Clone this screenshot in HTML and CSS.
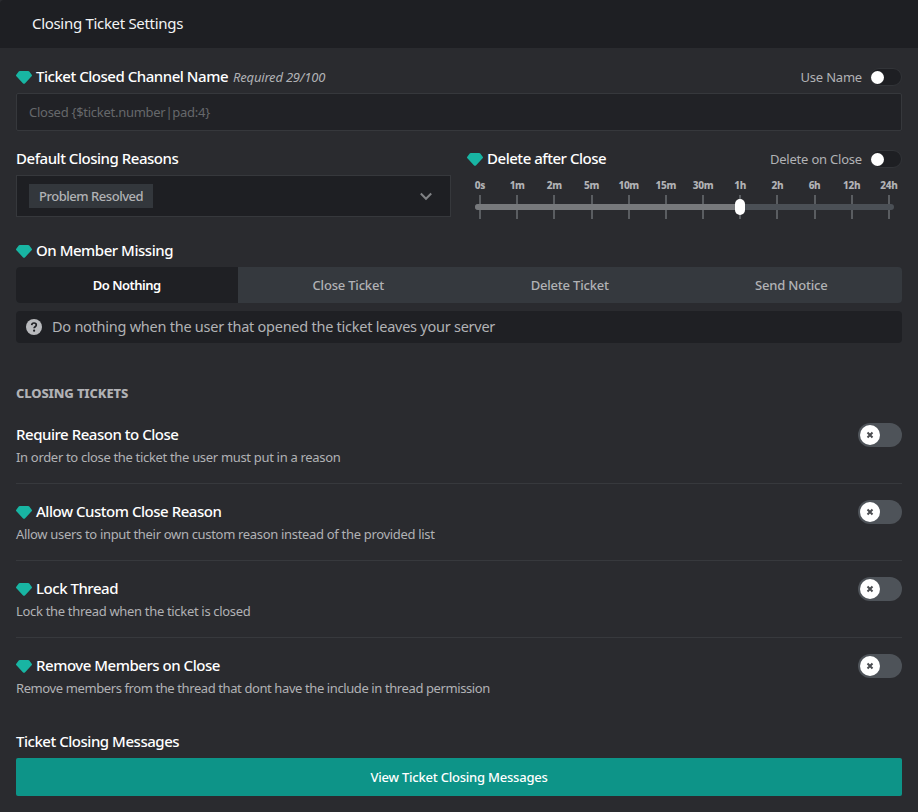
FILE: index.html
```html
<!DOCTYPE html>
<html lang="en">
<head>
<meta charset="utf-8">
<title>Closing Ticket Settings</title>
<link rel="stylesheet" href="styles.css">
</head>
<body>
<svg class="defs" width="0" height="0" aria-hidden="true">
  <symbol id="gem" viewBox="0 0 16 13"><path d="M3.800 0h8.400q.7 0 1.100.5l2.400 3.200q.6.8-.1 1.600l-6.700 7.100q-.9.900-1.800 0L.4 5.300q-.7-.8-.1-1.600L2.700.5Q3.100 0 3.800 0z"/></symbol>
  <symbol id="cross" viewBox="0 0 8 8"><path d="M1.500 1.500l5 5M6.500 1.500l-5 5"/></symbol>
</svg>
<section class="card">
  <header class="card-header">Closing Ticket Settings</header>
  <main class="card-body">
    <div class="field">
      <div class="label-row">
        <svg class="gem"><use href="#gem"/></svg><h3 class="title">Ticket Closed Channel Name</h3><em class="required">Required 29/100</em>
        <span class="mini-label">Use Name</span><span class="mini-toggle"></span>
      </div>
      <div class="input">Closed {$ticket.number|pad:4}</div>
    </div>

    <div class="columns">
      <div class="field">
        <div class="label-row"><h3 class="title">Default Closing Reasons</h3></div>
        <div class="select">
          <span class="tag">Problem Resolved</span>
          <svg class="chevron" viewBox="0 0 14 9"><path d="M1.800 1.500L7 6.800l5.200-5.300"/></svg>
        </div>
      </div>
      <div class="field">
        <div class="label-row">
          <svg class="gem"><use href="#gem"/></svg><h3 class="title">Delete after Close</h3>
          <span class="mini-label">Delete on Close</span><span class="mini-toggle"></span>
        </div>
        <div class="slider">
          <div class="stops">
            <span class="stop">0s</span><span class="stop">1m</span><span class="stop">2m</span><span class="stop">5m</span><span class="stop">10m</span><span class="stop">15m</span><span class="stop">30m</span><span class="stop">1h</span><span class="stop">2h</span><span class="stop">6h</span><span class="stop">12h</span><span class="stop">24h</span>
          </div>
          <div class="track"><div class="fill"></div><div class="handle"></div></div>
        </div>
      </div>
    </div>

    <div class="field missing">
      <div class="label-row"><svg class="gem"><use href="#gem"/></svg><h3 class="title">On Member Missing</h3></div>
      <div class="segments">
        <div class="segment active">Do Nothing</div>
        <div class="segment">Close Ticket</div>
        <div class="segment">Delete Ticket</div>
        <div class="segment">Send Notice</div>
      </div>
      <div class="hint">
        <svg class="help" viewBox="0 0 16 16"><circle cx="8" cy="8" r="8"/><path d="M5.700 6.100C5.800 4.700 6.700 4 8 4s2.300.8 2.300 2c0 1.700-2.200 1.700-2.200 3.300"/><circle class="dot" cx="8.100" cy="11.700" r="1.100"/></svg>
        <span class="hint-text">Do nothing when the user that opened the ticket leaves your server</span>
      </div>
    </div>

    <h2 class="section">CLOSING TICKETS</h2>
    <div class="option">
      <div class="option-text">
        <div class="option-title"><h3 class="title">Require Reason to Close</h3></div>
        <p class="desc">In order to close the ticket the user must put in a reason</p>
      </div>
      <span class="toggle"><span class="knob"><svg><use href="#cross"/></svg></span></span>
    </div>
    <div class="option">
      <div class="option-text">
        <div class="option-title"><svg class="gem"><use href="#gem"/></svg><h3 class="title">Allow Custom Close Reason</h3></div>
        <p class="desc">Allow users to input their own custom reason instead of the provided list</p>
      </div>
      <span class="toggle"><span class="knob"><svg><use href="#cross"/></svg></span></span>
    </div>
    <div class="option">
      <div class="option-text">
        <div class="option-title"><svg class="gem"><use href="#gem"/></svg><h3 class="title">Lock Thread</h3></div>
        <p class="desc">Lock the thread when the ticket is closed</p>
      </div>
      <span class="toggle"><span class="knob"><svg><use href="#cross"/></svg></span></span>
    </div>
    <div class="option last">
      <div class="option-text">
        <div class="option-title"><svg class="gem"><use href="#gem"/></svg><h3 class="title">Remove Members on Close</h3></div>
        <p class="desc tight">Remove members from the thread that dont have the include in thread permission</p>
      </div>
      <span class="toggle"><span class="knob"><svg><use href="#cross"/></svg></span></span>
    </div>

    <div class="messages-title"><h3 class="title">Ticket Closing Messages</h3></div>
    <div class="button">View Ticket Closing Messages</div>
  </main>
</section>
</body>
</html>
```
FILE: styles.css
```css
* { box-sizing: border-box; }

body {
  margin: 0;
  background: #2a2b2f;
  color: #b1b2b5;
  font-family: "Noto Sans", sans-serif;
  font-size: 13px;
}

h2, h3, p { margin: 0; }

.defs { display: block; }

.card { height: 812px; overflow: hidden; }

.card-header {
  height: 48px;
  padding-left: 32px;
  border-radius: 4px 0 0 0;
  background: #1e1f23;
  color: #f3f4f5;
  font-size: 15px;
  line-height: 47px;
  letter-spacing: -0.31px;
}

.card-body { padding: 13px 16px 16px; }

.label-row {
  display: flex;
  align-items: center;
  height: 32px;
}

.gem {
  flex: none;
  width: 16px;
  height: 13px;
  margin-right: 4px;
  fill: #18b5a3;
}

.title {
  margin-bottom: 2px;
  color: #fff;
  font-size: 15px;
  font-weight: 550;
  line-height: 22px;
  letter-spacing: -0.47px;
  white-space: nowrap;
}

.required {
  margin-left: 5px;
  letter-spacing: -0.2px;
}

.mini-label {
  margin-left: auto;
  margin-right: 8px;
  letter-spacing: -0.21px;
}

.mini-toggle {
  display: flex;
  align-items: center;
  width: 32px;
  height: 18px;
  padding-left: 0;
  border: 1px solid #323438;
  border-radius: 9px;
  background: #1e1f23;
}

.mini-toggle::before {
  content: "";
  width: 13px;
  height: 13px;
  border-radius: 50%;
  background: #fff;
}

.input {
  height: 38px;
  padding-left: 12px;
  border: 1px solid #36383c;
  border-radius: 2px;
  background: #212226;
  color: #66686b;
  line-height: 36px;
  letter-spacing: -0.27px;
}

.columns {
  display: grid;
  grid-template-columns: 1fr 1fr;
  gap: 16px;
  margin-top: 12px;
}

.select {
  display: flex;
  align-items: center;
  justify-content: space-between;
  height: 42px;
  padding: 0 17px 0 12px;
  border: 1px solid #36383c;
  background: #1e1f23;
}

.tag {
  height: 24px;
  padding: 0 10px;
  background: #33373c;
  font-weight: 500;
  line-height: 24px;
  letter-spacing: -0.47px;
}

.chevron {
  width: 14px;
  height: 9px;
  fill: none;
  stroke: #808285;
  stroke-width: 2;
}

.slider { padding: 0 8px; }

.stops {
  display: grid;
  grid-template-columns: repeat(12, 37.18px);
  margin: 0 -13.6px;
}

.stop {
  display: flex;
  flex-direction: column;
  align-items: center;
  height: 44px;
  font-size: 10px;
  font-weight: 800;
  line-height: 20px;
  letter-spacing: -0.3px;
}

.stop::after {
  content: "";
  width: 2px;
  height: 24px;
  background: #5a5d61;
}

.track {
  position: relative;
  height: 6px;
  margin-top: -15px;
  border-radius: 3px;
  background: #4b5056;
}

.fill {
  width: 265px;
  height: 6px;
  border-radius: 3px 0 0 3px;
  background: #77797c;
}

.handle {
  position: absolute;
  top: -5px;
  left: 260px;
  width: 10px;
  height: 16px;
  border-radius: 5px;
  background: #fff;
}

.missing { margin-top: 18px; }

.segments {
  display: grid;
  grid-template-columns: repeat(4, 1fr);
  height: 36px;
  border-radius: 4px;
  background: #35393e;
  overflow: hidden;
}

.segment {
  font-weight: 500;
  line-height: 36px;
  letter-spacing: -0.2px;
  text-align: center;
}

.active {
  background: #1f2024;
  color: #fff;
  font-weight: 600;
  letter-spacing: -0.49px;
}

.hint {
  display: flex;
  align-items: center;
  gap: 10px;
  height: 32px;
  margin-top: 8px;
  padding-left: 10px;
  border-radius: 4px;
  background: #1f2024;
  font-size: 14.5px;
  letter-spacing: -0.25px;
}

.hint-text { margin-bottom: 2px; }

.help {
  width: 16px;
  height: 16px;
  fill: #b9babd;
}

.help path {
  fill: none;
  stroke: #1f2024;
  stroke-width: 1.7;
}

.help .dot { fill: #1f2024; }

.section {
  margin-top: 40px;
  font-size: 13px;
  font-weight: 800;
  line-height: 20px;
  letter-spacing: -0.15px;
}

.option {
  display: flex;
  justify-content: space-between;
  margin-bottom: 16px;
  padding-bottom: 16px;
  border-bottom: 1px solid #37393d;
}

.section + .option { margin-top: 20px; }

.option.last {
  margin-bottom: 0;
  border-bottom: 0;
}

.option-title {
  display: flex;
  align-items: center;
  height: 24px;
}

.desc {
  line-height: 20px;
  letter-spacing: -0.32px;
}

.desc.tight { letter-spacing: -0.4px; }

.toggle {
  width: 44px;
  height: 24px;
  padding: 2px;
  border-radius: 12px;
  background: #4e5359;
}

.knob {
  display: grid;
  place-items: center;
  width: 20px;
  height: 20px;
  border-radius: 50%;
  background: #fff;
}

.knob svg {
  width: 8px;
  height: 8px;
  fill: none;
  stroke: #4a4c50;
  stroke-width: 2;
}

.messages-title {
  height: 24px;
  margin-top: 16px;
}

.button {
  height: 38px;
  margin-top: 4px;
  border-radius: 2px;
  background: #0d9488;
  color: #fff;
  font-weight: 500;
  line-height: 38px;
  letter-spacing: -0.22px;
  text-align: center;
}
```
